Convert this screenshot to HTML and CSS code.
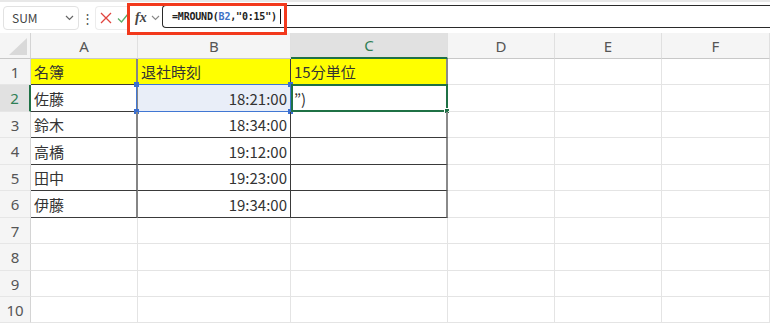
FILE: index.html
```html
<!DOCTYPE html>
<html lang="ja">

<head>
    <meta charset="UTF-8">
    <meta name="viewport" content="width=device-width, initial-scale=1.0">
    <title>MROUND</title>

    <link rel="stylesheet" href="styles.css">
</head>

<body>
    <div class="toolbar">
        <div class="namebox">
            <span>SUM</span>
            <svg width="9" height="6" viewBox="0 0 9 6"><path d="M1 1l3.5 3.5L8 1" fill="none" stroke="#666" stroke-width="1.2"/></svg>
        </div>
        <span class="dots">⋮</span>
        <div class="actions">
            <svg width="12" height="12" viewBox="0 0 12 12"><path d="M1 1l10 10M11 1L1 11" stroke="#e0443e" stroke-width="1.3"/></svg>
            <svg width="12" height="12" viewBox="0 0 12 12"><path d="M1 6.5l3.5 3.5L11 2" fill="none" stroke="#5cae6a" stroke-width="1.3"/></svg>
        </div>
        <div class="fx">
            <i>fx</i>
            <svg width="9" height="6" viewBox="0 0 9 6"><path d="M1 1l3.5 3.5L8 1" fill="none" stroke="#888" stroke-width="1.1"/></svg>
        </div>
        <div class="formula">=MROUND(<span class="ref">B2</span>,"0:15")<span class="caret"></span></div>
        <div class="callout"></div>
    </div>

    <div class="sheet">
        <div class="corner"><div class="tri"></div></div>
        <div class="colhead">A</div>
        <div class="colhead">B</div>
        <div class="colhead active">C</div>
        <div class="colhead">D</div>
        <div class="colhead">E</div>
        <div class="colhead">F</div>

        <div class="rowhead">1</div>
        <div class="cell hd tb ta">名簿</div>
        <div class="cell hd tb">退社時刻</div>
        <div class="cell hd tb tc">15分単位</div>
        <div class="cell"></div>
        <div class="cell"></div>
        <div class="cell"></div>

        <div class="rowhead active">2</div>
        <div class="cell tb ta">佐藤</div>
        <div class="cell tb num sel">18:21:00
            <span class="handle h1"></span><span class="handle h2"></span>
            <span class="handle h3"></span><span class="handle h4"></span>
        </div>
        <div class="cell tb tc edit">”)<span class="ghandle"></span></div>
        <div class="cell"></div>
        <div class="cell"></div>
        <div class="cell"></div>

        <div class="rowhead">3</div>
        <div class="cell tb ta">鈴木</div>
        <div class="cell tb num">18:34:00</div>
        <div class="cell tb tc"></div>
        <div class="cell"></div>
        <div class="cell"></div>
        <div class="cell"></div>

        <div class="rowhead">4</div>
        <div class="cell tb ta">高橋</div>
        <div class="cell tb num">19:12:00</div>
        <div class="cell tb tc"></div>
        <div class="cell"></div>
        <div class="cell"></div>
        <div class="cell"></div>

        <div class="rowhead">5</div>
        <div class="cell tb ta">田中</div>
        <div class="cell tb num">19:23:00</div>
        <div class="cell tb tc"></div>
        <div class="cell"></div>
        <div class="cell"></div>
        <div class="cell"></div>

        <div class="rowhead">6</div>
        <div class="cell tb ta">伊藤</div>
        <div class="cell tb num">19:34:00</div>
        <div class="cell tb tc"></div>
        <div class="cell"></div>
        <div class="cell"></div>
        <div class="cell"></div>

        <div class="rowhead">7</div>
        <div class="cell"></div><div class="cell"></div><div class="cell"></div>
        <div class="cell"></div><div class="cell"></div><div class="cell"></div>

        <div class="rowhead">8</div>
        <div class="cell"></div><div class="cell"></div><div class="cell"></div>
        <div class="cell"></div><div class="cell"></div><div class="cell"></div>

        <div class="rowhead">9</div>
        <div class="cell"></div><div class="cell"></div><div class="cell"></div>
        <div class="cell"></div><div class="cell"></div><div class="cell"></div>

        <div class="rowhead">10</div>
        <div class="cell"></div><div class="cell"></div><div class="cell"></div>
        <div class="cell"></div><div class="cell"></div><div class="cell"></div>
    </div>
</body>

</html>
```

FILE: styles.css
```css
body {
    margin: 0;
    width: 770px;
    height: 323px;
    overflow: hidden;
    background: #ffffff;
    font-family: "Noto Sans CJK JP", "Noto Sans", sans-serif;
    color: #333333;
}

/* formula bar */
.toolbar {
    position: relative;
    display: flex;
    align-items: center;
    height: 31px;
    border-top: 2px solid #e8e8e8;
    box-sizing: content-box;
    padding-left: 3px;
}

.namebox {
    display: flex;
    align-items: center;
    justify-content: space-between;
    width: 76px;
    height: 24px;
    box-sizing: border-box;
    padding: 0 4px 0 8px;
    border: 1px solid #e2e2e2;
    border-radius: 4px;
    font-size: 12px;
    color: #444444;
}

.dots {
    width: 16px;
    text-align: center;
    font-size: 13px;
    color: #555555;
}

.actions {
    display: flex;
    align-items: center;
    gap: 5px;
    width: 35px;
    height: 24px;
    padding-left: 4px;
    border: 1px solid #ececec;
    border-right: none;
    border-radius: 4px 0 0 4px;
    box-sizing: border-box;
}

.fx {
    display: flex;
    align-items: center;
    gap: 4px;
    width: 32px;
    box-sizing: border-box;
    padding-left: 5px;
}

.fx i {
    font-family: "Liberation Serif", serif;
    font-size: 14px;
    font-weight: bold;
    color: #444444;
}

.formula {
    display: flex;
    align-items: center;
    flex: 1;
    height: 21px;
    margin-top: -3px;
    padding-left: 9px;
    border: 1.5px solid #2a2a2a;
    border-right: none;
    border-radius: 4px 0 0 4px;
    font-family: "DejaVu Sans Mono", monospace;
    font-size: 10px;
    font-weight: bold;
    letter-spacing: -0.2px;
    color: #222222;
}

.formula .ref {
    color: #3d72c6;
}

.caret {
    width: 1px;
    height: 15px;
    margin-left: 3px;
    background: #111111;
}

.callout {
    position: absolute;
    left: 127px;
    top: 1px;
    width: 160px;
    height: 32px;
    box-sizing: border-box;
    border: 3px solid #f2391c;
}

/* grid */
.sheet {
    display: grid;
    grid-template-columns: 31px 107px 153px 157px 107px 107px 108px;
    grid-template-rows: 26px 26px 27px 26px 27px 26px 27px 26px 27px 26px 26px;
}

.sheet > div {
    box-sizing: border-box;
}

.corner {
    display: flex;
    align-items: flex-end;
    justify-content: flex-end;
    padding: 0 3px 3px 0;
    background: #f5f5f5;
    border-right: 1px solid #d4d4d4;
    border-bottom: 1px solid #c8c8c8;
}

.tri {
    width: 18px;
    height: 17px;
    background: #d9d9d9;
    clip-path: polygon(100% 0, 100% 100%, 0 100%);
}

.colhead {
    display: flex;
    align-items: center;
    justify-content: center;
    background: #f5f5f5;
    border-right: 1px solid #e0e0e0;
    border-bottom: 1px solid #c8c8c8;
    font-family: "Noto Sans", sans-serif;
    font-size: 15px;
    color: #555555;
}

.colhead.active {
    background: #e1e1e1;
    color: #2f7f55;
    border-bottom: 2px solid #1f7145;
}

.rowhead {
    display: flex;
    align-items: center;
    justify-content: center;
    background: #f5f5f5;
    border-right: 1px solid #d4d4d4;
    border-bottom: 1px solid #e6e6e6;
    font-family: "Noto Sans", sans-serif;
    font-size: 15px;
    color: #555555;
}

.rowhead.active {
    background: #e1e1e1;
    color: #2f7f55;
    border-right: 2px solid #1f7145;
}

.cell {
    position: relative;
    display: flex;
    align-items: center;
    padding: 0 3px;
    border-right: 1px solid #e4e4e4;
    border-bottom: 1px solid #e4e4e4;
    font-size: 15px;
    white-space: nowrap;
}

.cell.hd {
    background: #ffff00;
}

.cell.tb {
    border-bottom: 1px solid #3a3a3a;
    border-right: 1px solid #3a3a3a;
}

.cell.ta {
    border-right: 2px solid #858585;
}

.cell.tc {
    border-right: 2px solid #8a8a8a;
}

.cell.num {
    justify-content: flex-end;
}

/* selection */
.cell.sel {
    background: #e9eef8;
}

.cell.sel::before {
    content: "";
    position: absolute;
    left: -2px;
    top: -1px;
    right: -1px;
    bottom: -1px;
    border: 1.5px solid #4177d3;
}

.handle {
    position: absolute;
    width: 5px;
    height: 5px;
    background: #3b6fd0;
}

.h1 { left: -4px; top: -3px; }
.h2 { right: -3px; top: -3px; }
.h3 { left: -4px; bottom: -3px; }
.h4 { right: -3px; bottom: -3px; }

.cell.edit::before {
    content: "";
    position: absolute;
    left: 0;
    top: -1px;
    right: -2px;
    bottom: -1px;
    border: 2px solid #1f7145;
}

.ghandle {
    position: absolute;
    right: -4px;
    bottom: -3px;
    width: 4px;
    height: 4px;
    background: #1f7145;
    border: 1px solid #ffffff;
}
```
